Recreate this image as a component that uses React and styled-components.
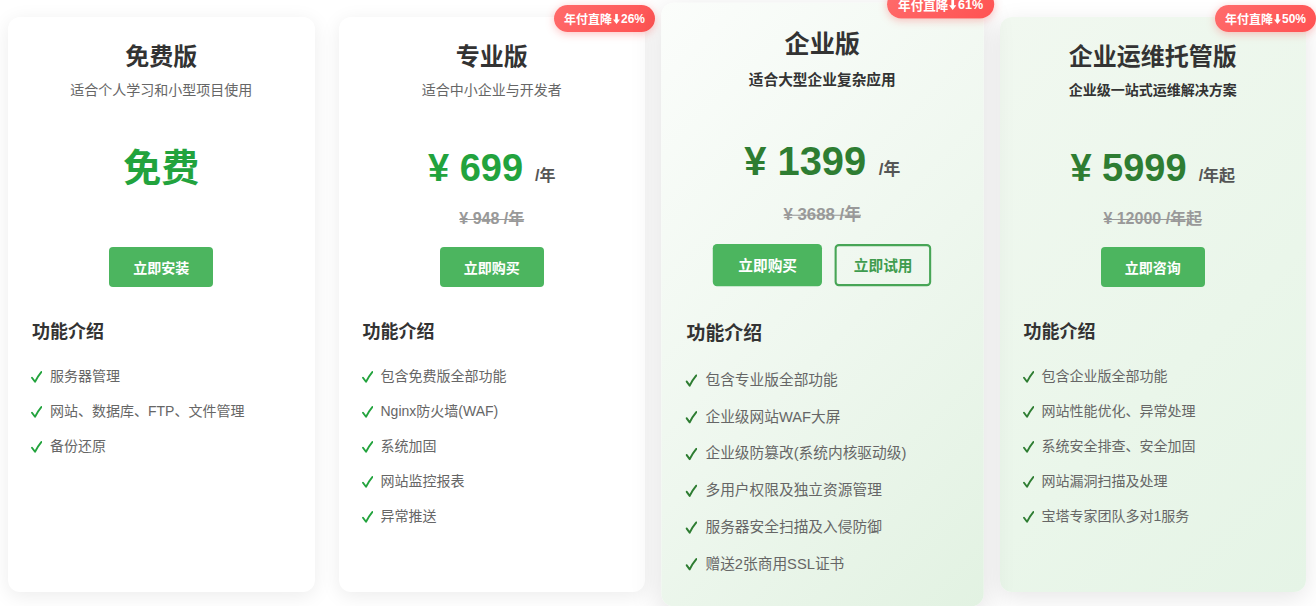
import React from "react";
import styled, { createGlobalStyle, css } from "styled-components";

const Global = createGlobalStyle`
  html, body { margin: 0; padding: 0; background: #ffffff; }
  body { font-family: "Liberation Sans", "Noto Sans CJK SC", sans-serif; }
  * { box-sizing: border-box; }
`;

const Page = styled.div`
  display: grid;
  grid-template-columns: repeat(4, 1fr);
  gap: 24px;
  padding: 17px 10px 0 8px;
  width: 1316px;
  height: 606px;
  overflow: hidden;
`;

const Card = styled.div`
  position: relative;
  display: flex;
  flex-direction: column;
  height: 575px;
  padding: 24px 24px 23px;
  border-radius: 12px;
  background: #ffffff;
  box-shadow: 0 4px 20px rgba(0, 0, 0, 0.08);
  ${(p) =>
    p.$variant === "featured" &&
    css`
      background: linear-gradient(135deg, #fbfdfb 0%, #eef7ee 55%, #e2f2e2 100%);
      box-shadow: 0 8px 30px rgba(0, 0, 0, 0.13);
      transform: scale(1.05);
      z-index: 2;
    `}
  ${(p) =>
    p.$variant === "managed" &&
    css`
      background: linear-gradient(135deg, #f1f8f0 0%, #eaf6ea 60%, #e5f4e6 100%);
      box-shadow: 0 6px 24px rgba(0, 0, 0, 0.1);
    `}
`;

const Badge = styled.div`
  position: absolute;
  top: -12px;
  right: -10px;
  height: 27px;
  padding: 0 10px;
  display: flex;
  align-items: center;
  border-radius: 14px;
  background: linear-gradient(135deg, #ff6b6b 0%, #ff5252 100%);
  color: #ffffff;
  font-size: 12px;
  font-weight: 700;
  white-space: nowrap;
  box-shadow: 0 2px 8px rgba(255, 82, 82, 0.35);
`;

const Arrow = styled.svg`
  width: 7px;
  height: 10px;
  margin: 0 1px;
  flex: none;
`;

const Title = styled.h2`
  margin: 0;
  text-align: center;
  font-size: 24px;
  line-height: 32px;
  font-weight: 700;
  color: #333333;
`;

const Subtitle = styled.p`
  margin: 8px 0 0;
  text-align: center;
  font-size: 14px;
  line-height: 18px;
  color: ${(p) => (p.$strong ? "#333333" : "#666666")};
  font-weight: ${(p) => (p.$strong ? 700 : 400)};
`;

const PriceBox = styled.div`
  margin-top: 44px;
  height: 104px;
  display: flex;
  flex-direction: column;
  align-items: center;
`;

const PriceLine = styled.div`
  display: flex;
  align-items: baseline;
  justify-content: center;
  line-height: 50px;
`;

const Amount = styled.span`
  font-size: 38px;
  font-weight: 700;
  color: ${(p) => (p.$dark ? "#2e7d32" : "#22a33d")};
`;

const Unit = styled.span`
  margin-left: 12px;
  font-size: 16px;
  font-weight: 700;
  color: #555555;
`;

const OldPrice = styled.div`
  margin-top: 8px;
  line-height: 20px;
  font-size: 16px;
  font-weight: 700;
  color: #999999;
  text-decoration: line-through;
`;

const ButtonRow = styled.div`
  display: flex;
  justify-content: center;
  gap: 12px;
`;

const Button = styled.button`
  height: 40px;
  padding: 0 24px;
  border-radius: 4px;
  border: none;
  background: #4cb55f;
  color: #ffffff;
  font-family: inherit;
  font-size: 14px;
  font-weight: 700;
  cursor: pointer;
  ${(p) =>
    p.$outline &&
    css`
      padding: 0 16px;
      background: transparent;
      border: 2px solid #47a556;
      color: #3f9c4e;
    `}
`;

const SectionTitle = styled.h3`
  margin: 32px 0 0;
  font-size: 18px;
  line-height: 26px;
  font-weight: 700;
  color: #333333;
`;

const FeatureList = styled.ul`
  list-style: none;
  margin: 14px 0 0;
  padding: 0;
`;

const Feature = styled.li`
  display: flex;
  align-items: center;
  padding: 7px 0;
  line-height: 21px;
  font-size: 14px;
  color: #666666;
`;

const Check = styled.svg`
  width: 11px;
  height: 12px;
  margin: 0 8px 0 -1px;
  flex: none;
  color: ${(p) => (p.$dark ? "#2e7d32" : "#22a33d")};
`;

const plans = [
  {
    title: "免费版",
    subtitle: "适合个人学习和小型项目使用",
    free: true,
    buttons: [{ label: "立即安装" }],
    features: ["服务器管理", "网站、数据库、FTP、文件管理", "备份还原"],
  },
  {
    title: "专业版",
    subtitle: "适合中小企业与开发者",
    badge: "26%",
    price: "¥ 699",
    unit: "/年",
    old: "¥ 948 /年",
    buttons: [{ label: "立即购买" }],
    features: ["包含免费版全部功能", "Nginx防火墙(WAF)", "系统加固", "网站监控报表", "异常推送"],
  },
  {
    title: "企业版",
    subtitle: "适合大型企业复杂应用",
    variant: "featured",
    dark: true,
    badge: "61%",
    price: "¥ 1399",
    unit: "/年",
    old: "¥ 3688 /年",
    buttons: [{ label: "立即购买" }, { label: "立即试用", outline: true }],
    features: [
      "包含专业版全部功能",
      "企业级网站WAF大屏",
      "企业级防篡改(系统内核驱动级)",
      "多用户权限及独立资源管理",
      "服务器安全扫描及入侵防御",
      "赠送2张商用SSL证书",
    ],
  },
  {
    title: "企业运维托管版",
    subtitle: "企业级一站式运维解决方案",
    variant: "managed",
    dark: true,
    badge: "50%",
    price: "¥ 5999",
    unit: "/年起",
    old: "¥ 12000 /年起",
    buttons: [{ label: "立即咨询" }],
    features: [
      "包含企业版全部功能",
      "网站性能优化、异常处理",
      "系统安全排查、安全加固",
      "网站漏洞扫描及处理",
      "宝塔专家团队多对1服务",
    ],
  },
];

function PlanCard({ plan }) {
  return (
    <Card $variant={plan.variant}>
      {plan.badge && (
        <Badge>
          年付直降
          <Arrow viewBox="0 0 7 10" aria-label="↓">
            <path d="M2.2 0 H4.8 V5.5 H7 L3.5 10 L0 5.5 H2.2 Z" fill="currentColor" />
          </Arrow>
          {plan.badge}
        </Badge>
      )}
      <Title>{plan.title}</Title>
      <Subtitle $strong={plan.dark}>{plan.subtitle}</Subtitle>
      <PriceBox>
        {plan.free ? (
          <PriceLine>
            <Amount>免费</Amount>
          </PriceLine>
        ) : (
          <>
            <PriceLine>
              <Amount $dark={plan.dark}>{plan.price}</Amount>
              <Unit>{plan.unit}</Unit>
            </PriceLine>
            <OldPrice>{plan.old}</OldPrice>
          </>
        )}
      </PriceBox>
      <ButtonRow>
        {plan.buttons.map((b) => (
          <Button key={b.label} $outline={b.outline}>
            {b.label}
          </Button>
        ))}
      </ButtonRow>
      <SectionTitle>功能介绍</SectionTitle>
      <FeatureList>
        {plan.features.map((f) => (
          <Feature key={f}>
            <Check $dark={plan.dark} viewBox="0 0 11 12">
              <path
                d="M1 6.8 L4 10.8 Q6.5 5.5 10.3 1"
                fill="none"
                stroke="currentColor"
                strokeWidth="1.9"
                strokeLinecap="round"
                strokeLinejoin="round"
              />
            </Check>
            {f}
          </Feature>
        ))}
      </FeatureList>
    </Card>
  );
}

export default function App() {
  return (
    <>
      <Global />
      <Page>
        {plans.map((p) => (
          <PlanCard key={p.title} plan={p} />
        ))}
      </Page>
    </>
  );
}
